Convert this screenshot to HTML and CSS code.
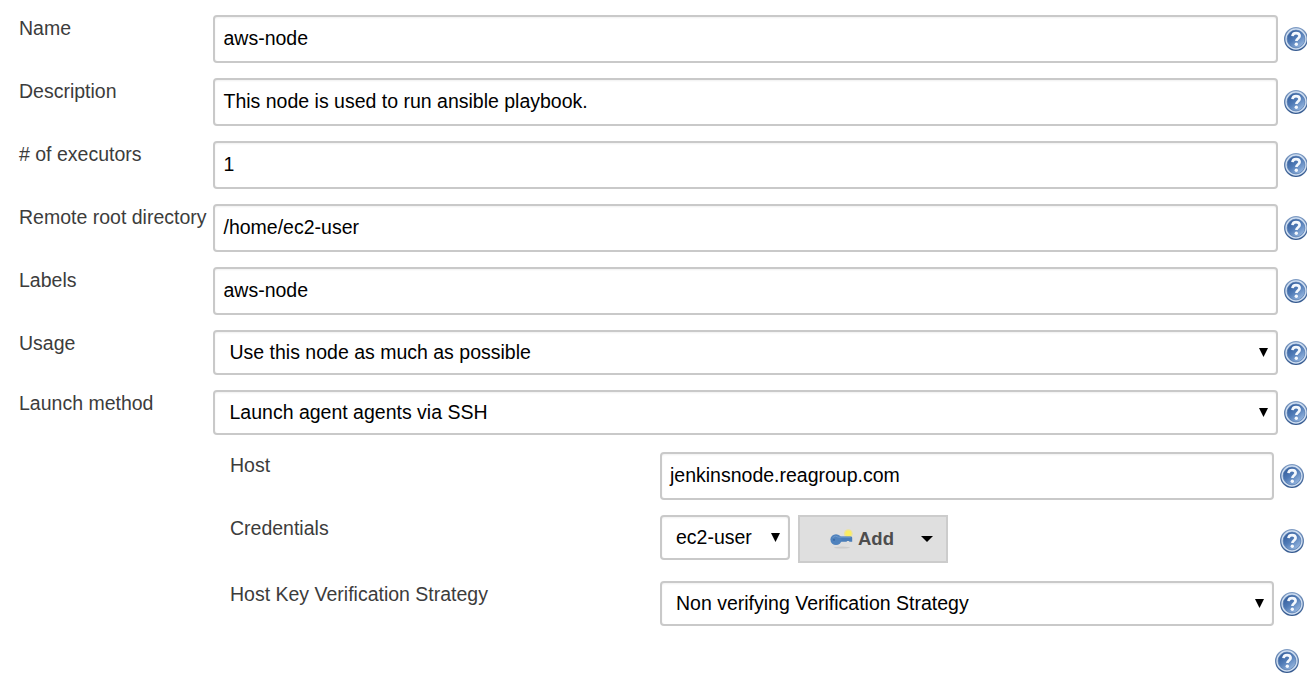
FILE: index.html
```html
<!DOCTYPE html>
<html lang="en">
<head>
<meta charset="utf-8">
<title>Node configuration</title>
<link rel="stylesheet" href="styles.css">
</head>
<body>
<svg class="defs" width="0" height="0">
  <defs>
    <linearGradient id="disc" x1="0" y1="0" x2=".8" y2="1">
      <stop offset="0" stop-color="#2c5594"/>
      <stop offset=".5" stop-color="#4f7ab6"/>
      <stop offset="1" stop-color="#9dbce3"/>
    </linearGradient>
    <linearGradient id="rim" x1="0" y1="0" x2="0" y2="1">
      <stop offset="0" stop-color="#7f9cc4"/>
      <stop offset="1" stop-color="#34598f"/>
    </linearGradient>
  </defs>
  <symbol id="help" viewBox="0 0 24 24">
    <circle cx="12" cy="12" r="11.3" fill="#cfdef1" stroke="url(#rim)" stroke-width="1.3"/>
    <circle cx="12" cy="12" r="8.9" fill="url(#disc)" stroke="#5278ad" stroke-width=".7"/>
    <path d="M8.5 9.2C8.7 7 10 6.1 12 6.1c2.1 0 3.6 1.1 3.6 3 0 2.4-3.2 2.5-3.2 4.9" fill="none" stroke="#f4f8fd" stroke-width="2.7"/>
    <circle cx="12.3" cy="17.2" r="1.7" fill="#f4f8fd"/>
  </symbol>
</svg>
<main class="form">
  <div class="row"><label class="label">Name</label><div class="field">aws-node</div><svg class="help"><use href="#help"/></svg></div>
  <div class="row"><label class="label">Description</label><div class="field">This node is used to run ansible playbook.</div><svg class="help"><use href="#help"/></svg></div>
  <div class="row"><label class="label"># of executors</label><div class="field">1</div><svg class="help"><use href="#help"/></svg></div>
  <div class="row"><label class="label">Remote root directory</label><div class="field">/home/ec2-user</div><svg class="help"><use href="#help"/></svg></div>
  <div class="row"><label class="label">Labels</label><div class="field">aws-node</div><svg class="help"><use href="#help"/></svg></div>
  <div class="row"><label class="label">Usage</label><div class="field select">Use this node as much as possible<svg class="arrow" viewBox="0 0 9 9"><path d="M0 0h9L4.5 9z"/></svg></div><svg class="help"><use href="#help"/></svg></div>
  <div class="row"><label class="label">Launch method</label><div class="field select">Launch agent agents via SSH<svg class="arrow" viewBox="0 0 9 9"><path d="M0 0h9L4.5 9z"/></svg></div><svg class="help"><use href="#help"/></svg></div>
  <section class="nested">
    <div class="row"><label class="label">Host</label><div class="field">jenkinsnode.reagroup.com</div><svg class="help"><use href="#help"/></svg></div>
    <div class="row credentials">
      <label class="label">Credentials</label>
      <div class="controls">
        <div class="field select">ec2-user<svg class="arrow" viewBox="0 0 9 9"><path d="M0 0h9L4.5 9z"/></svg></div>
        <button class="add" type="button">
          <svg class="key" viewBox="0 0 24 22">
            <ellipse cx="12" cy="18.6" rx="8" ry="1" fill="#cccccc"/>
            <circle cx="18.3" cy="4.6" r="4.4" fill="#eee39a"/>
            <circle cx="18.3" cy="4.6" r="3" fill="#fbee62"/>
            <path d="M9 7.4h11.8q1.4 0 1.4 1.4v4h-3v-.7h-2.4v.7H9z" fill="#4a7db8"/>
            <ellipse cx="6" cy="10.6" rx="5.6" ry="5.4" fill="#4f82bd"/>
            <path d="M2.6 8.6q2.6-2.6 6-.4h12" fill="none" stroke="#6d99cb" stroke-width="1"/>
            <circle cx="4" cy="10.8" r="1.1" fill="#3a6aa5"/>
          </svg>
          <span class="add-text">Add</span>
          <svg class="caret" viewBox="0 0 12 6"><path d="M0 0h12L6 6z"/></svg>
        </button>
      </div>
      <svg class="help"><use href="#help"/></svg>
    </div>
    <div class="row"><label class="label">Host Key Verification Strategy</label><div class="field select">Non verifying Verification Strategy<svg class="arrow" viewBox="0 0 9 9"><path d="M0 0h9L4.5 9z"/></svg></div><svg class="help"><use href="#help"/></svg></div>
  </section>
  <div class="footer"><svg class="help"><use href="#help"/></svg></div>
</main>
</body>
</html>
```
FILE: styles.css
```css
* { box-sizing: border-box; }
html { overflow: hidden; }
body {
  margin: 0;
  background: #fff;
  color: #000;
  font: 19.5px/26px "Liberation Sans", Arial, sans-serif;
}
.defs { display: block; }
.form {
  display: flex;
  flex-direction: column;
  gap: 15px;
  width: 1308px;
  padding: 15px 0 0 19px;
}
.row {
  display: grid;
  align-items: start;
}
.form > .row { grid-template-columns: 194px 1065px 30px; }
.row > .help { justify-self: end; }
.label { color: #3c3c3c; white-space: nowrap; }
.field {
  display: flex;
  align-items: center;
  height: 48px;
  padding: 0 8px 2px 8.5px;
  border: 2px solid #c9c9c9;
  border-radius: 4px;
  background: #fff;
  box-shadow: inset 0 1px 2px #f0f0f0;
  white-space: nowrap;
}
.select {
  justify-content: space-between;
  height: 45px;
  padding: 0 8px 1px 14.5px;
}
.arrow { width: 9px; height: 9px; }
.help {
  align-self: center;
  flex: none;
  width: 24px;
  height: 24px;
}
.nested {
  margin-top: 2px;
  padding-left: 211px;
}
.nested .row { grid-template-columns: 430px 614px 30px; }
.nested .field { padding-left: 8px; }
.nested .select { padding-left: 14px; }
.credentials { margin: 15px 0 18px; }
.credentials > .help { margin-top: 4px; }
.controls { display: flex; gap: 8px; }
.controls .select { width: 130px; padding-right: 8px; }
.add {
  display: flex;
  align-items: center;
  width: 150px;
  height: 48px;
  padding: 0 13px 0 30px;
  border: 2px solid #ccc;
  background: #dfdfdf;
  color: #4d4d4d;
  font: bold 18.5px/26px "Liberation Sans", Arial, sans-serif;
}
.key { width: 24px; height: 22px; margin-top: 1px; }
.add-text { margin-left: 4px; }
.caret { width: 12px; height: 6px; margin-left: auto; fill: #000; }
.footer {
  display: flex;
  justify-content: flex-end;
  margin-top: 8px;
  padding-right: 9px;
}
```
